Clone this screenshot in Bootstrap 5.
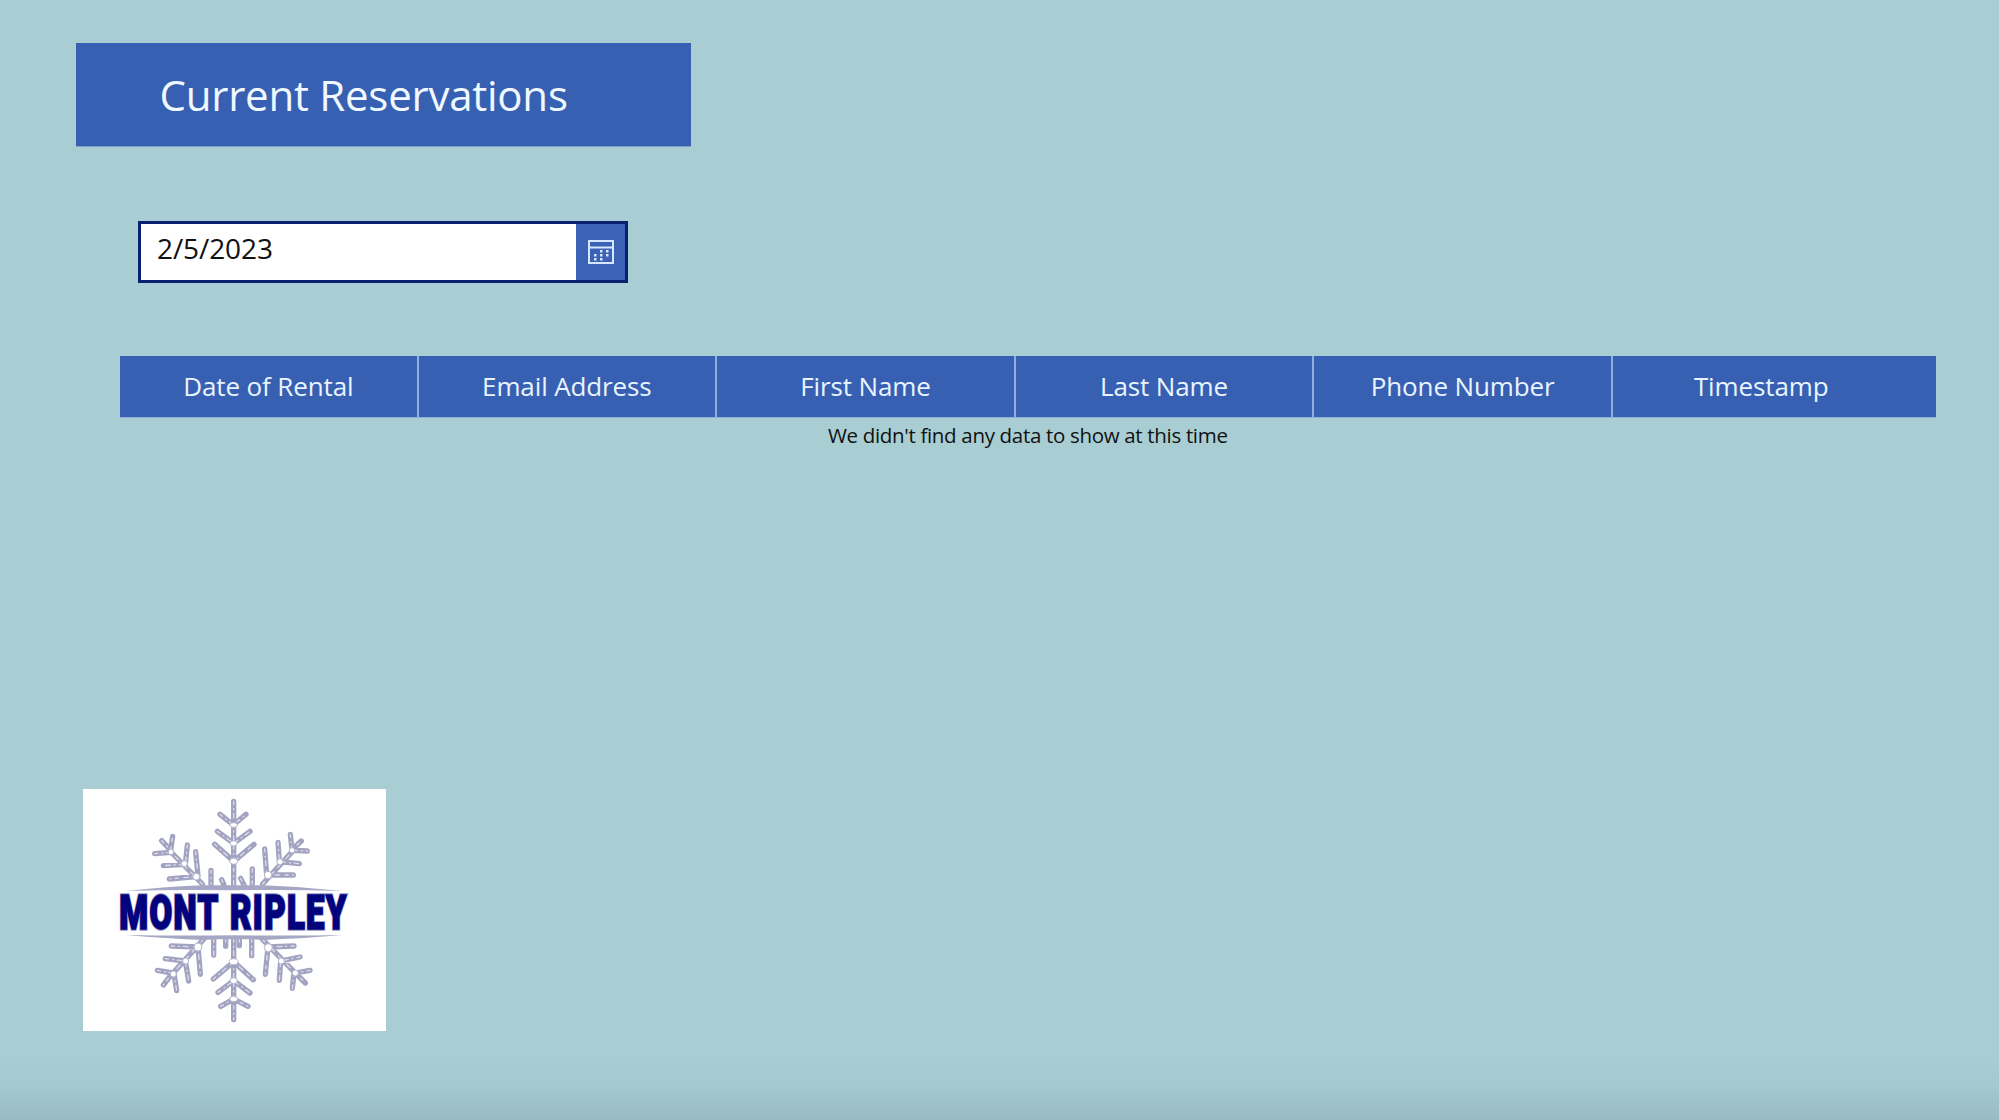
<!DOCTYPE html>
<html lang="en">
<head>
<meta charset="utf-8">
<meta name="viewport" content="width=device-width, initial-scale=1">
<title>Current Reservations</title>
<link href="https://cdn.jsdelivr.net/npm/bootstrap@5.3.0/dist/css/bootstrap.min.css" rel="stylesheet">
<style>
  :root { --brand: #3860b2; --canvas: #a8cdd3; }
  body {
    font-family: "Open Sans", "Noto Sans", sans-serif;
    background: linear-gradient(to bottom, var(--canvas) 0, var(--canvas) 1055px, #a4c9cf 1085px, #99bcc3 1120px);
    height: 1120px; overflow: hidden; color: #111;
  }
  .page-shell { height: 1120px; padding: 43px 63.5px 89px 75.5px; }
  .title-bar { width: 615.5px; height: 104px; padding-left: 84px; background: var(--brand); border-bottom: 1px solid #7f9fd0; }
  .title-bar h1 { font-size: 42px; font-weight: 400; line-height: 1; letter-spacing: -.24px; color: #f0f9ff; white-space: nowrap; }
  .date-picker { width: 490px; height: 62px; margin: 73.5px 0 0 62.5px; border: 3px solid #0a2172; }
  .date-picker .form-control { font-size: 28px; line-height: 1; letter-spacing: -.1px; color: #111; padding: 0 0 8px 16px; background: #fff; }
  .date-picker .btn { width: 49px; background: #3c62b6; }
  .grid-view { margin: 73px 0 0 44.5px; }
  .grid-head { height: 62.5px; background: var(--brand); border-bottom: 1px solid #8eaedb; padding-right: 24px; }
  .grid-cell { color: #e9f4ff; font-size: 26px; line-height: 1; letter-spacing: -.12px; white-space: nowrap; border-right: 2px solid #90aee0; }
  .grid-cell:last-child { border-right-color: transparent; }
  .grid-empty { font-size: 20.5px; letter-spacing: -.32px; line-height: 35px; }
  .logo-card { width: 303px; height: 242.5px; background: #fff; margin-left: 7.5px; }
  .logo-card text { font-family: Roboto, "Liberation Sans", sans-serif; font-weight: 900; letter-spacing: 6px; word-spacing: 8px; }
</style>
<script src="https://cdn.jsdelivr.net/npm/bootstrap@5.3.0/dist/js/bootstrap.bundle.min.js"></script>
</head>
<body>
<main class="page-shell d-flex flex-column">
  <header class="title-bar d-flex align-items-center">
    <h1 class="m-0">Current Reservations</h1>
  </header>

  <div class="date-picker input-group flex-nowrap">
    <input class="form-control border-0 rounded-0 shadow-none" type="text" value="2/5/2023" aria-label="Date">
    <button class="btn border-0 rounded-0 p-0 d-flex align-items-center justify-content-center" type="button" aria-label="Open calendar">
      <svg width="26" height="24" viewBox="0 0 26 24" fill="none" stroke="#d5e8ff" stroke-width="2">
        <path d="M1 1H25V23H1ZM1 7.5H25"/>
        <path fill="#d5e8ff" stroke="none" d="M12 10h2.5v2.5H12zM18 10h2.5v2.5H18zM6 14h2.5v2.5H6zM12 14h2.5v2.5H12zM18 14h2.5v2.5H18zM6 18h2.5v2.5H6zM12 18h2.5v2.5H12z"/>
      </svg>
    </button>
  </div>

  <section class="grid-view">
    <div class="grid-head d-flex">
      <div class="grid-cell d-flex flex-fill w-100 align-items-center justify-content-center">Date of Rental</div>
      <div class="grid-cell d-flex flex-fill w-100 align-items-center justify-content-center">Email Address</div>
      <div class="grid-cell d-flex flex-fill w-100 align-items-center justify-content-center">First Name</div>
      <div class="grid-cell d-flex flex-fill w-100 align-items-center justify-content-center">Last Name</div>
      <div class="grid-cell d-flex flex-fill w-100 align-items-center justify-content-center">Phone Number</div>
      <div class="grid-cell d-flex flex-fill w-100 align-items-center justify-content-center">Timestamp</div>
    </div>
    <p class="grid-empty text-center m-0">We didn't find any data to show at this time</p>
  </section>

  <div class="logo-card mt-auto">
    <svg class="d-block overflow-visible" width="303" height="242.5" viewBox="39 40 909 727.5" role="img" aria-label="Mont Ripley">
      <defs>
        <path id="flake" d="M491 77V330M450 116L490 148L528 116M442 167L491 203L540 167M434 206L491 257L552 206
          M397 325L300 226M275 195L302 224L308 182M254 234L302 230M352 208L346 266L280 270M377 228L384 302L298 310M423 284V325M455 312L462 328
          M512 308L522 328
          M578 325L672 222M661 176L666 222L694 196M672 224L712 226M624 200L628 258L688 264M584 220L590 298L670 298M547 280V325
          M491 490V732M452 692L491 670L534 692M444 650L491 615L540 652M430 610L491 558L550 612
          M400 492L300 602M262 584L308 592L280 628M312 594L320 645M286 549L346 556L356 616M304 511L384 514L391 596M431 490V538M467 490V512M508 490V510
          M578 492L680 596M720 584L676 592L706 622M672 592L667 638M690 544L632 556L628 614M672 511L594 514L586 596M545 490V540"/>
      </defs>
      <g fill="none" stroke-linecap="round" stroke-linejoin="round">
        <use href="#flake" stroke="#a2a3c1" stroke-width="16"/>
        <use href="#flake" stroke="#dcdce9" stroke-width="4" stroke-dasharray="9 13 3 11 14 17"/>
      </g>
      <g fill="#fff" stroke="#b4b5ce" stroke-width="3">
        <ellipse cx="491" cy="148" rx="12" ry="7"/><ellipse cx="491" cy="203" rx="11" ry="8"/><ellipse cx="491" cy="257" rx="12" ry="9"/>
        <circle cx="303" cy="229" r="8"/><circle cx="343" cy="264" r="9"/><circle cx="379" cy="303" r="10"/>
        <circle cx="666" cy="224" r="8"/><circle cx="630" cy="258" r="9"/><circle cx="594" cy="298" r="11"/>
        <ellipse cx="491" cy="558" rx="13" ry="9"/><ellipse cx="491" cy="615" rx="11" ry="9"/><ellipse cx="491" cy="670" rx="12" ry="8"/>
        <circle cx="310" cy="595" r="9"/><circle cx="347" cy="556" r="9"/><circle cx="384" cy="514" r="12"/>
        <circle cx="676" cy="592" r="9"/><circle cx="634" cy="556" r="9"/><circle cx="595" cy="516" r="12"/>
      </g>
      <path fill="#fff" d="M140 348Q490 338 840 348V477Q490 487 140 477Z"/>
      <path fill="#a6a7c4" d="M168 346Q290 333 400 329H580Q700 333 818 346Q660 341 491 344Q320 341 168 346ZM168 478Q290 489 400 493L440 491H550L580 493Q700 489 818 478Q660 481 491 479Q320 481 168 478Z"/>
      <g transform="translate(148 460) scale(.75 1)">
        <text font-size="143" textLength="914" lengthAdjust="spacingAndGlyphs" fill="#03037d" stroke="#9c9cc8" stroke-width="10" paint-order="stroke">MONT RIPLEY</text>
        <text font-size="143" textLength="914" lengthAdjust="spacingAndGlyphs" fill="#03037d" stroke="#03037d" stroke-width="4" aria-hidden="true">MONT RIPLEY</text>
      </g>
    </svg>
  </div>
</main>
</body>
</html>
